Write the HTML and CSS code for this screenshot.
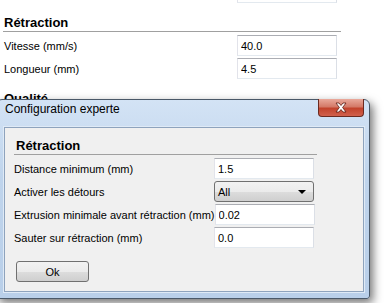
FILE: index.html
```html
<!DOCTYPE html>
<html lang="fr">
<head>
    <meta charset="UTF-8">
    <meta name="viewport" content="width=device-width, initial-scale=1.0">
    <title>Configuration experte</title>
    <link rel="stylesheet" href="styles.css">
</head>
<body>
    <div class="page">
        <!-- Réglages en arrière-plan -->
        <div class="form page-form">
            <div class="row row-cut">
                <span class="label"></span>
                <input type="text" class="field" value="">
            </div>

            <h2 class="section-title">Rétraction</h2>
            <div class="row">
                <span class="label">Vitesse (mm/s)</span>
                <input type="text" class="field" value="40.0">
            </div>
            <div class="row">
                <span class="label">Longueur (mm)</span>
                <input type="text" class="field" value="4.5">
            </div>

            <h2 class="section-title">Qualité</h2>
        </div>

        <!-- Fenêtre de configuration experte -->
        <div class="dialog">
            <div class="dialog-title">
                <span>Configuration experte</span>
                <button class="btn-close" type="button">
                    <svg width="14" height="11" viewBox="0 0 14 11">
                        <path d="M2 1 L5 1 L7 3.5 L9 1 L12 1 L8.6 5.5 L12 10 L9 10 L7 7.5 L5 10 L2 10 L5.4 5.5 Z" fill="#fff" stroke="#5a1a10" stroke-width="0.8" stroke-linejoin="round"/>
                    </svg>
                </button>
            </div>

            <div class="dialog-body">
                <div class="form dialog-form">
                    <h2 class="section-title">Rétraction</h2>
                    <div class="row">
                        <span class="label">Distance minimum (mm)</span>
                        <input type="text" class="field" value="1.5">
                    </div>
                    <div class="row">
                        <span class="label">Activer les détours</span>
                        <div class="select">
                            <span>All</span>
                            <span class="select-arrow"></span>
                        </div>
                    </div>
                    <div class="row">
                        <span class="label">Extrusion minimale avant rétraction (mm)</span>
                        <input type="text" class="field" value="0.02">
                    </div>
                    <div class="row">
                        <span class="label">Sauter sur rétraction (mm)</span>
                        <input type="text" class="field" value="0.0">
                    </div>
                </div>

                <button type="button" class="btn-ok">Ok</button>
            </div>
        </div>
    </div>
</body>
</html>
```

FILE: styles.css
```css
* {
    margin: 0;
    padding: 0;
    box-sizing: border-box;
}

body {
    font-family: 'Liberation Sans', Arial, sans-serif;
    font-size: 11px;
    color: #000;
    background-color: #fff;
    width: 388px;
    height: 303px;
    overflow: hidden;
}

.page {
    position: relative;
    height: 303px;
    overflow: hidden;
}

/* Formulaires */
.form {
    display: flex;
    flex-direction: column;
}

.page-form {
    margin-left: 3px;
    width: 338px;
    margin-top: -18px;
}

.row {
    display: flex;
    align-items: center;
    height: 21px;
    margin-bottom: 2px;
    padding-right: 4px;
}

.label {
    flex: 1;
    padding-left: 1px;
    white-space: nowrap;
}

.section-title {
    font-size: 13px;
    font-weight: bold;
    line-height: 16px;
    height: 17px;
    margin-top: 10px;
    margin-bottom: 3px;
    padding-left: 1px;
    border-bottom: 1px solid #a0a0a0;
}

.field {
    width: 100px;
    height: 21px;
    padding: 0 3px;
    font-family: inherit;
    font-size: 11px;
    color: #000;
    background: #fff;
    border: 1px solid;
    border-color: #abadb3 #dbdfe6 #e3e9ef #e2e3ea;
    outline: none;
}

/* Fenêtre */
.dialog {
    position: absolute;
    left: -4px;
    top: 99px;
    width: 374px;
    height: 200px;
    padding: 0 5px 6px 7px;
    background: linear-gradient(to bottom, #d3e3f5 0%, #bfd4ec 40%, #b9cfe9 100%);
    border: 1px solid #4a5868;
    border-radius: 6px 6px 3px 3px;
    box-shadow: 3px 4px 10px rgba(0, 0, 0, 0.55);
}

.dialog-title {
    position: relative;
    height: 27px;
    padding: 2px 0 0 1px;
    font-size: 12px;
    line-height: 15px;
}

.btn-close {
    position: absolute;
    top: -1px;
    right: 0;
    width: 46px;
    height: 18px;
    display: flex;
    align-items: center;
    justify-content: center;
    border: 1px solid #6b2a20;
    border-top: none;
    border-radius: 0 0 4px 4px;
    background: linear-gradient(to bottom, #e9a99b 0%, #d47a68 45%, #c2432c 55%, #d1614d 100%);
}

.dialog-body {
    height: 165px;
    padding: 10px 0 0 9px;
    background: #f0f0f0;
    border: 1px solid #8ea3bd;
    box-shadow: 0 0 0 1px #dfeaf6;
}

.dialog-form {
    width: 303px;
}

.dialog-form .row {
    padding-right: 3px;
}

.dialog-form .label {
    padding-left: 0;
}

.dialog-form .section-title {
    margin-top: 0;
    padding-left: 2px;
}

/* Liste déroulante */
.select {
    width: 100px;
    height: 21px;
    display: flex;
    align-items: center;
    justify-content: space-between;
    padding: 0 7px 0 3px;
    border: 1px solid #707070;
    border-radius: 3px;
    background: linear-gradient(to bottom, #f2f2f2 0%, #ebebeb 50%, #dddddd 51%, #cfcfcf 100%);
}

.select-arrow {
    width: 0;
    height: 0;
    border-left: 4px solid transparent;
    border-right: 4px solid transparent;
    border-top: 4px solid #000;
}

.btn-ok {
    margin-top: 11px;
    margin-left: 2px;
    width: 73px;
    height: 21px;
    font-family: inherit;
    font-size: 11px;
    color: #000;
    border: 1px solid #707070;
    border-radius: 3px;
    background: linear-gradient(to bottom, #f2f2f2 0%, #ebebeb 50%, #dddddd 51%, #cfcfcf 100%);
}
```
